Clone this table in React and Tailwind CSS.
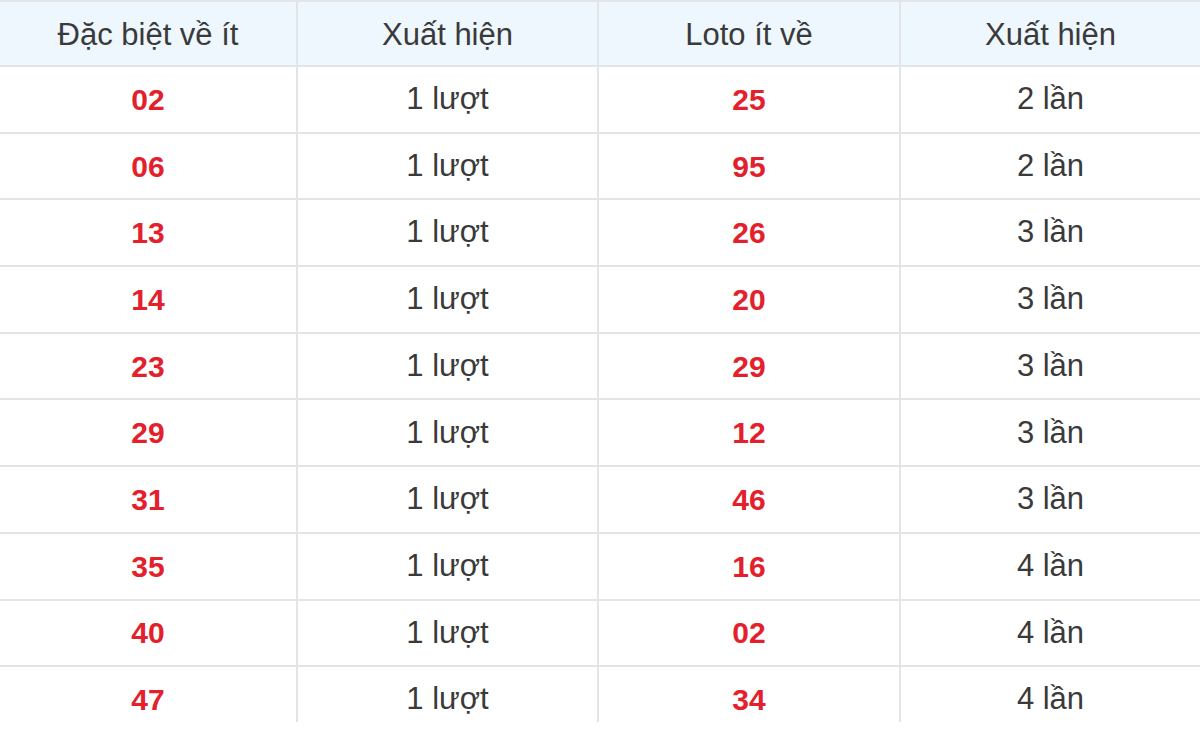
import React from 'react'

const ROWS = [
  ['02', '1 lượt', '25', '2 lần'],
  ['06', '1 lượt', '95', '2 lần'],
  ['13', '1 lượt', '26', '3 lần'],
  ['14', '1 lượt', '20', '3 lần'],
  ['23', '1 lượt', '29', '3 lần'],
  ['29', '1 lượt', '12', '3 lần'],
  ['31', '1 lượt', '46', '3 lần'],
  ['35', '1 lượt', '16', '4 lần'],
  ['40', '1 lượt', '02', '4 lần'],
  ['47', '1 lượt', '34', '4 lần'],
]

const HEAD = ['Đặc biệt về ít', 'Xuất hiện', 'Loto ít về', 'Xuất hiện']

const cell = 'flex items-center justify-center border-r-2 border-[#e2e4e8] last:border-r-0'

export default function App() {
  return (
    <div className="w-[1200px] h-[736px] bg-white overflow-hidden" style={{ fontFamily: '"Liberation Sans", Arial, sans-serif' }}>
      <div className="h-[722px] overflow-hidden border-t-2 border-[#e2e4e8]">
        {/* Header */}
        <div className="grid grid-cols-[298px_301px_302px_1fr] h-[65px] bg-[#eef6fe] border-b-2 border-[#e2e4e8] text-[31px] text-[#3a3a3a]">
          {HEAD.map((h, i) => (
            <div key={i} className={`${cell} pt-[3px]`}>{h}</div>
          ))}
        </div>

        {/* Body */}
        {ROWS.map((r, i) => (
          <div key={i} className="grid grid-cols-[298px_301px_302px_1fr] h-[66.7px] border-b-2 border-[#e2e4e8] text-[31px] text-[#3a3a3a]">
            <div className={`${cell} font-bold text-[30px] text-[#e3202b]`}>{r[0]}</div>
            <div className={cell}>{r[1]}</div>
            <div className={`${cell} font-bold text-[30px] text-[#e3202b]`}>{r[2]}</div>
            <div className={cell}>{r[3]}</div>
          </div>
        ))}
      </div>
    </div>
  )
}
